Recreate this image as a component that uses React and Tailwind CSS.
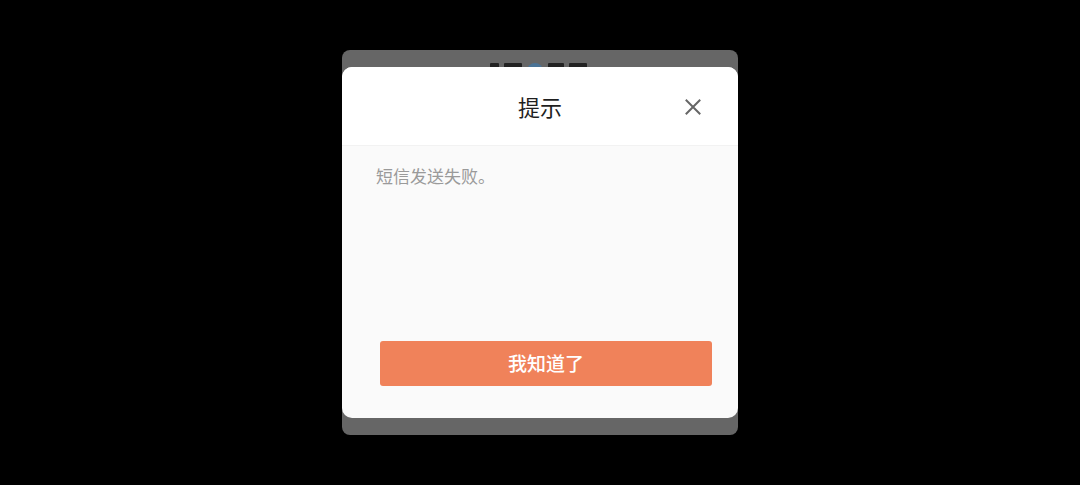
import React from "react";

// Alert dialog: "提示" with single confirm button
const App = () => {
  return (
    <div
      className="w-full h-[485px] bg-black flex items-center justify-center"
      style={{ fontFamily: '"Noto Sans CJK SC", "Noto Sans", sans-serif' }}
    >
      <div className="relative w-[396px] h-[385px] rounded-[8px] bg-[#666666] pt-[17px] overflow-hidden">
        {/* logo behind the dialog, only its top edge shows */}
        <div className="absolute top-[13px] left-0 right-0 flex justify-center gap-[5px] pr-[4px]">
          <span className="w-[9px] h-[14px] bg-[#222] rounded-[1px]" />
          <span className="w-[18px] h-[14px] bg-[#222] rounded-[1px]" />
          <span className="w-[16px] h-[16px] bg-[#4a7396] rounded-full" />
          <span className="w-[16px] h-[14px] bg-[#222] rounded-[1px]" />
          <span className="w-[18px] h-[14px] bg-[#222] rounded-[1px]" />
        </div>

        <div className="relative h-[351px] rounded-[10px] bg-[#fafafa] overflow-hidden flex flex-col">
          {/* header */}
          <div className="relative h-[79px] bg-white border-b border-[#f2f2f2] flex items-center justify-center">
            <span className="text-[22px] text-[#1f1f1f] leading-none">提示</span>
            <button className="absolute right-[37px] top-[32px] w-[16px] h-[16px] flex items-center justify-center">
              <svg width="16" height="16" viewBox="0 0 16 16" fill="none">
                <path d="M1.5 1.5L14.5 14.5M14.5 1.5L1.5 14.5" stroke="#666" strokeWidth="2" strokeLinecap="square" />
              </svg>
            </button>
          </div>

          {/* body */}
          <div className="flex-1 flex flex-col px-[34px] pt-[19px]">
            <p className="text-[17px] text-[#9a9a9a] leading-[22px]">短信发送失败。</p>
          </div>

          {/* action */}
          <div className="pl-[38px] pr-[26px] pb-[32px]">
            <button className="w-full h-[45px] rounded-[3px] bg-[#f0825a] text-white text-[19px] font-medium flex items-center justify-center">
              我知道了
            </button>
          </div>
        </div>
      </div>
    </div>
  );
};

export default App;
